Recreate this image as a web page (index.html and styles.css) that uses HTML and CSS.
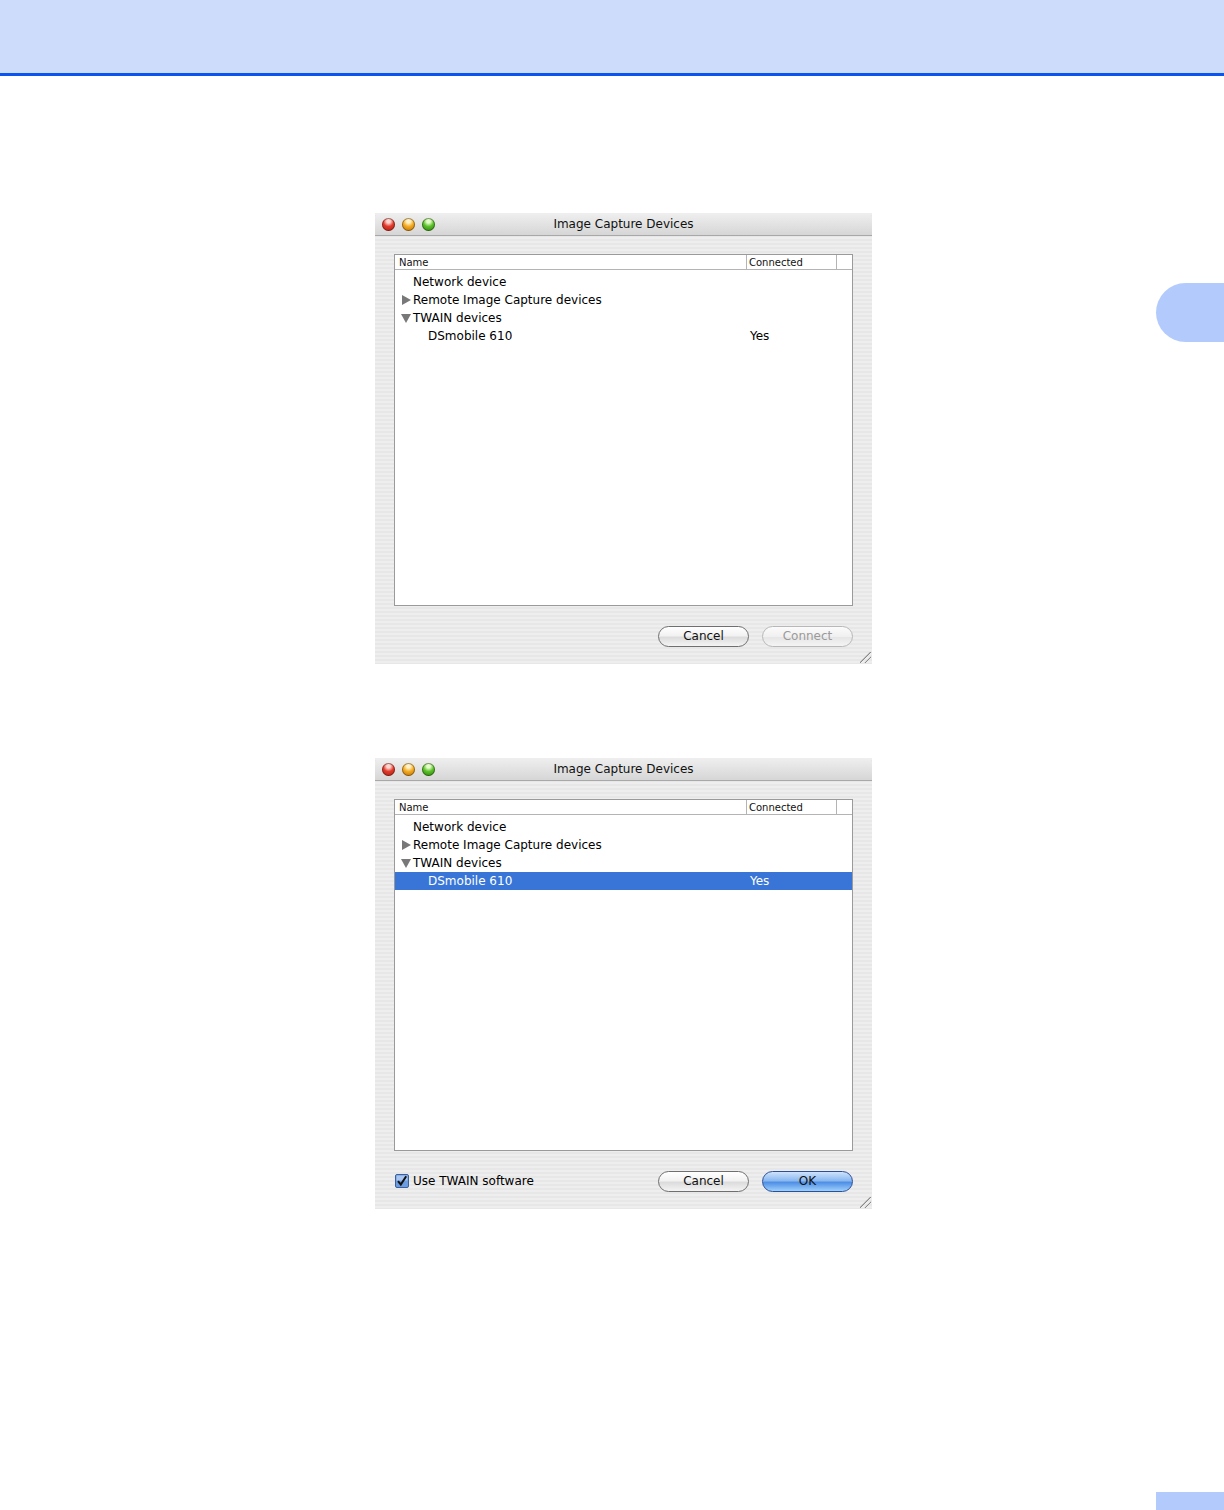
FILE: index.html
```html
<!DOCTYPE html>
<html lang="en">
<head>
<meta charset="UTF-8">
<title>Image Capture Devices</title>
<link rel="stylesheet" href="styles.css">
</head>
<body>

<header class="top-band"></header>
<div class="side-tab"></div>

<main class="shots">

  <!-- First dialog: nothing selected -->
  <section class="win">
    <div class="titlebar">
      <div class="lights">
        <span class="light red"></span>
        <span class="light amber"></span>
        <span class="light green"></span>
      </div>
      <div class="title">Image Capture Devices</div>
    </div>
    <div class="win-body">
      <div class="list">
        <div class="list-head">
          <div class="col-name">Name</div>
          <div class="col-conn">Connected</div>
          <div class="col-rest"></div>
        </div>
        <div class="rows">
          <div class="row lvl1"><span class="name">Network device</span></div>
          <div class="row lvl1"><span class="tri closed"></span><span class="name">Remote Image Capture devices</span></div>
          <div class="row lvl1"><span class="tri open"></span><span class="name">TWAIN devices</span></div>
          <div class="row lvl2"><span class="name">DSmobile 610</span><span class="conn">Yes</span></div>
        </div>
      </div>
      <div class="actions">
        <div class="spacer"></div>
        <button class="aqua">Cancel</button>
        <button class="aqua disabled">Connect</button>
      </div>
    </div>
    <div class="grip"></div>
  </section>

  <!-- Second dialog: device selected -->
  <section class="win">
    <div class="titlebar">
      <div class="lights">
        <span class="light red"></span>
        <span class="light amber"></span>
        <span class="light green"></span>
      </div>
      <div class="title">Image Capture Devices</div>
    </div>
    <div class="win-body">
      <div class="list">
        <div class="list-head">
          <div class="col-name">Name</div>
          <div class="col-conn">Connected</div>
          <div class="col-rest"></div>
        </div>
        <div class="rows">
          <div class="row lvl1"><span class="name">Network device</span></div>
          <div class="row lvl1"><span class="tri closed"></span><span class="name">Remote Image Capture devices</span></div>
          <div class="row lvl1"><span class="tri open"></span><span class="name">TWAIN devices</span></div>
          <div class="row lvl2 selected"><span class="name">DSmobile 610</span><span class="conn">Yes</span></div>
        </div>
      </div>
      <div class="actions">
        <label class="check">
          <svg width="14" height="14" viewBox="0 0 14 14">
            <rect x="0.5" y="0.5" width="13" height="13" rx="1.5" fill="#6b9be0" stroke="#3a5f9c"/>
            <rect x="1.5" y="1.5" width="11" height="5" fill="#a9c6f0"/>
            <path d="M3 7.2 L5.8 10.5 L11.2 2.2" fill="none" stroke="#111" stroke-width="2"/>
          </svg>
          Use TWAIN software
        </label>
        <div class="spacer"></div>
        <button class="aqua">Cancel</button>
        <button class="aqua default">OK</button>
      </div>
    </div>
    <div class="grip"></div>
  </section>

</main>

<div class="page-tab"></div>

</body>
</html>
```

FILE: styles.css
```css
body {
  margin: 0;
  background: #fff;
  font-family: "DejaVu Sans", "Liberation Sans", sans-serif;
  color: #000;
  position: relative;
  min-height: 1510px;
}

/* Page chrome */
.top-band {
  height: 73px;
  background: #cddcfb;
  border-bottom: 3px solid #0a55f0;
}
.side-tab {
  position: absolute;
  top: 283px;
  right: 0;
  width: 68px;
  height: 59px;
  background: #b3cbfc;
  border-radius: 30px 0 0 30px;
}
.page-tab {
  position: absolute;
  top: 1492px;
  right: 0;
  width: 68px;
  height: 18px;
  background: #b3cbfc;
}

.shots {
  display: flex;
  flex-direction: column;
  gap: 94px;
  padding: 137px 0 0 375px;
}

/* Window */
.win {
  position: relative;
  width: 497px;
  height: 451px;
  background: repeating-linear-gradient(#eeeeee 0 2px, #e7e7e7 2px 4px);
  display: flex;
  flex-direction: column;
}
.titlebar {
  height: 22px;
  border-radius: 6px 6px 0 0;
  background: linear-gradient(#efefef, #d6d6d6);
  border-bottom: 1px solid #a8a8a8;
  display: flex;
  align-items: center;
  position: relative;
}
.lights { display: flex; gap: 7px; padding-left: 7px; }
.light {
  width: 13px;
  height: 13px;
  border-radius: 50%;
  box-shadow: inset 0 0 0 1px rgba(0,0,0,0.35);
}
.light.red { background: radial-gradient(circle at 50% 25%, #ffd6d0 0 15%, #e23a2c 45%, #a01a0e); }
.light.amber { background: radial-gradient(circle at 50% 25%, #fff2c8 0 15%, #f4ac22 45%, #b06400); }
.light.green { background: radial-gradient(circle at 50% 25%, #e4fcc8 0 15%, #5cc22a 45%, #247408); }
.title {
  position: absolute;
  left: 0; right: 0; top: 4px;
  text-align: center;
  font-size: 12px;
  color: #111;
}

.win-body {
  flex: 1;
  padding: 18px 19px 0 19px;
  display: flex;
  flex-direction: column;
}

/* List view */
.list {
  height: 350px;
  background: #fff;
  border: 1px solid #9a9a9a;
  display: flex;
  flex-direction: column;
}
.list-head {
  display: flex;
  height: 14px;
  border-bottom: 1px solid #b4b4b4;
  font-size: 10px;
  line-height: 15px;
  color: #111;
}
.col-name { width: 347px; padding-left: 4px; border-right: 1px solid #b4b4b4; }
.col-conn { width: 87px; padding-left: 2px; border-right: 1px solid #b4b4b4; }
.col-rest { flex: 1; }

.rows { padding-top: 3px; }
.row {
  height: 18px;
  display: flex;
  align-items: center;
  font-size: 12px;
  position: relative;
}
.row .name { padding-left: 18px; }
.row.lvl2 .name { padding-left: 33px; }
.row .conn { position: absolute; left: 355px; }
.row.selected { background: #3875d7; color: #fff; }

.tri {
  position: absolute;
  left: 7px;
  width: 0;
  height: 0;
}
.tri.closed {
  border-top: 5px solid transparent;
  border-bottom: 5px solid transparent;
  border-left: 9px solid #787878;
}
.tri.open {
  left: 6px;
  border-left: 5px solid transparent;
  border-right: 5px solid transparent;
  border-top: 9px solid #787878;
}

/* Button row */
.actions {
  display: flex;
  align-items: center;
  gap: 13px;
  margin-top: 19px;
  height: 22px;
}
.spacer { flex: 1; }
.check {
  display: flex;
  align-items: center;
  gap: 4px;
  font-size: 12px;
  margin-left: 1px;
}
.aqua {
  width: 91px;
  height: 21px;
  border-radius: 11px;
  border: 1px solid #6f6f6f;
  background: linear-gradient(#ffffff, #f2f2f2 45%, #dcdcdc 55%, #f4f4f4);
  font-family: inherit;
  font-size: 12px;
  color: #111;
  padding: 0;
}
.aqua.disabled { color: #9a9a9a; border-color: #b8b8b8; background: linear-gradient(#fbfbfb, #f0f0f0 50%, #e6e6e6 55%, #f4f4f4); }
.aqua.default {
  border-color: #2c4f9a;
  background: linear-gradient(#cfe3fb, #8ab8f0 45%, #4f8fe6 55%, #9ed0fb);
}

.grip {
  position: absolute;
  right: 1px;
  bottom: 1px;
  width: 11px;
  height: 11px;
  background: linear-gradient(135deg, transparent 45%, #8a8a8a 46% 52%, transparent 53% 68%, #8a8a8a 69% 75%, transparent 76%);
}
```
